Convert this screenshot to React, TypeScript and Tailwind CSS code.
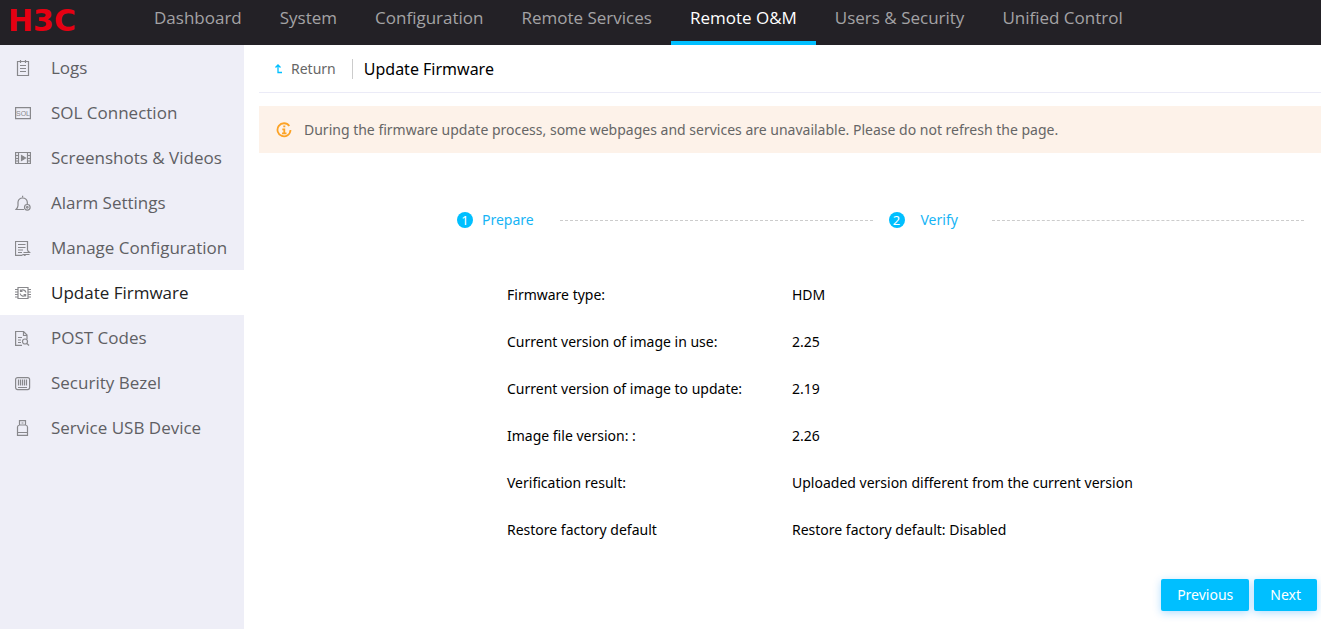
import type { ReactNode } from "react";
import clsx from "clsx";

const NAV = [
  "Dashboard",
  "System",
  "Configuration",
  "Remote Services",
  "Remote O&M",
  "Users & Security",
  "Unified Control",
];

function Icon({ children }: { children: ReactNode }) {
  return (
    <svg
      aria-hidden="true"
      viewBox="0 0 16 16"
      className="h-4 w-4 shrink-0 text-[#88888c]"
      fill="none"
      stroke="currentColor"
      strokeWidth="1.2"
    >
      {children}
    </svg>
  );
}

const MENU: { label: string; icon: ReactNode }[] = [
  {
    label: "Logs",
    icon: <path d="M2.5 1.5h11v14h-11zM5.5 0v3M10.5 0v3M5 5.5h6M5 8.5h6M5 11.5h6" />,
  },
  {
    label: "SOL Connection",
    icon: (
      <>
        <path d="M.6 2.6h14.8v11H.6z" />
        <text
          x="8"
          y="11"
          textAnchor="middle"
          stroke="none"
          fill="currentColor"
          className="font-['Liberation_Sans',sans-serif] text-[7px]"
        >
          SOL
        </text>
      </>
    ),
  },
  {
    label: "Screenshots & Videos",
    icon: (
      <>
        <path d="M.6 2.5h14.8v11H.6zM3.5 2.5v11M12.5 2.5v11M.5 5.5h3M.5 8.5h3M.5 11h3M12.5 5.5h3M12.5 8.5h3M12.5 11h3" />
        <path d="M6.5 5.5v5l4-2.5z" fill="currentColor" />
      </>
    ),
  },
  {
    label: "Alarm Settings",
    icon: (
      <>
        <path d="M9 14.5H1C2 13.5 3 12.3 3 10.5V7a4.7 4.7 0 0 1 9.3 0v2M7.6 2.3V.8" />
        <circle cx="12.3" cy="12.3" r="2.8" />
        <circle cx="12.3" cy="12.3" r=".8" />
      </>
    ),
  },
  {
    label: "Manage Configuration",
    icon: (
      <path d="M7.5 15.4h-7V1.5h12v9M3 4.5h7.5M3 7.5h7.5M3 10h5M3 12.5h4M8.5 12.5h6l-2-2M14.5 14.5h-6l2 1.5" />
    ),
  },
  {
    label: "Update Firmware",
    icon: (
      <>
        <path d="M3 2.5h10v11H3zM0 4.5h3M0 7h3M0 9.5h3M0 12h3M13 4.5h3M13 7h3M13 9.5h3M13 12h3" />
        <path d="M5.2 8.5a3 3 0 0 0 5 1.8M10.9 7.5a3 3 0 0 0-5-1.8M5.5 4.5v2h2M10.6 11.5v-2h-2" />
      </>
    ),
  },
  {
    label: "POST Codes",
    icon: (
      <>
        <path d="M7 15.4H.6V1.5h8L12 5v4M8.5 1.5v4H12M3 7.5h4M3 10h3M3 12.5h3" />
        <circle cx="10" cy="11.5" r="2.5" />
        <path d="m11.8 13.3 2.2 2.2" />
      </>
    ),
  },
  {
    label: "Security Bezel",
    icon: (
      <>
        <rect x=".6" y="2.6" width="14" height="12" rx="2" />
        <path d="M3.5 4.5v6M5.5 4.5v6M7.5 4.5v6M9.5 4.5v6M11.5 4.5v6M3 12.5h9" />
      </>
    ),
  },
  {
    label: "Service USB Device",
    icon: (
      <path d="M4.5 5V.6h6V5M6.5 3h2M4.5 5c-1.3.3-2 1-2 2v8.4h10V7c0-1-.7-1.7-2-2zM2.5 12.5h10" />
    ),
  },
];

const DETAILS = [
  ["Firmware type:", "HDM"],
  ["Current version of image in use:", "2.25"],
  ["Current version of image to update:", "2.19"],
  ["Image file version: :", "2.26"],
  ["Verification result:", "Uploaded version different from the current version"],
  ["Restore factory default", "Restore factory default: Disabled"],
];

function Header() {
  return (
    <header className="flex h-[45px] bg-[#232126]">
      <a
        href="#"
        className="flex w-[135px] shrink-0 items-center pb-1 pl-2 font-['DejaVu_Sans',sans-serif] text-[30px] leading-8 font-bold text-[#e60012]"
      >
        H3C
      </a>
      <nav className="flex font-['Open_Sans',sans-serif] text-[17px] leading-6">
        {NAV.map((item) => {
          const active = item === "Remote O&M";
          return (
            <a
              key={item}
              href="#"
              aria-current={active ? "page" : undefined}
              className={clsx(
                "border-b-4 px-[19px] pt-[6px] whitespace-nowrap",
                active ? "border-[#00bfff] text-white" : "border-transparent text-[#a3a3a5]"
              )}
            >
              {item}
            </a>
          );
        })}
      </nav>
    </header>
  );
}

function Sidebar() {
  return (
    <aside className="w-[244px] shrink-0 bg-[#eeeef7] font-['Open_Sans',sans-serif]">
      {MENU.map(({ label, icon }) => {
        const active = label === "Update Firmware";
        return (
          <a
            key={label}
            href="#"
            aria-current={active ? "page" : undefined}
            className={clsx(
              "flex h-[45px] items-center gap-5 pl-[15px] text-[17px] whitespace-nowrap",
              active ? "bg-white text-[#222]" : "text-[#5f5f64]"
            )}
          >
            <Icon>{icon}</Icon>
            {label}
          </a>
        );
      })}
    </aside>
  );
}

function Steps() {
  return (
    <ol className="flex pt-[55px] pr-[17px] pl-[198px] text-sm text-[#16b4f5]">
      {["Prepare", "Verify"].map((step, i) => (
        <li key={step} className="flex h-6 flex-1 items-center pr-4 last:pr-0">
          <span className="flex h-4 w-4 items-center justify-center rounded-full bg-[#00bfff] text-[13px] text-white">
            {i + 1}
          </span>
          <span className={clsx("w-[87px]", i === 0 ? "pl-[9px]" : "pl-4")}>{step}</span>
          <span className="flex-1 border-t border-dashed border-[#ccc]" />
        </li>
      ))}
    </ol>
  );
}

export default function App() {
  return (
    <div className="flex min-h-screen flex-col bg-white font-['Noto_Sans',sans-serif]">
      <Header />
      <div className="flex flex-1">
        <Sidebar />
        <main className="flex min-w-0 flex-1 flex-col pl-[15px]">
          <div className="flex h-12 items-center border-b border-[#ebebf7]">
            <a href="#" className="flex items-center gap-2 pl-4 text-sm text-[#666]">
              <svg
                aria-hidden="true"
                viewBox="0 0 8 10"
                className="h-[10px] w-2 text-[#00bfff]"
                fill="none"
                stroke="currentColor"
                strokeWidth="1.3"
              >
                <path d="M.5 3.5 3 1l2.5 2.5M3 1v7.5h4" />
              </svg>
              Return
            </a>
            <h1 className="ml-4 flex h-5 items-center border-l border-[#ccc] pl-[11px] text-base text-black">
              Update Firmware
            </h1>
          </div>

          <div
            role="alert"
            className="mt-[13px] flex h-[47px] items-center gap-3 bg-[#fdf2e9] pl-[17px] text-sm text-[#666]"
          >
            <svg
              aria-hidden="true"
              viewBox="0 0 16 16"
              className="h-4 w-4 shrink-0 text-[#fca326]"
              fill="none"
              stroke="currentColor"
              strokeWidth="1.8"
            >
              <path d="M13.3 4A6.5 6.5 0 1 0 14.5 8" />
              <path d="M7.3 4.3h2M6.3 7.4h2V11M6 11.3h4.5" />
            </svg>
            During the firmware update process, some webpages and services are unavailable. Please do not
            refresh the page.
          </div>

          <Steps />

          <table className="mt-[39px] ml-[248px] text-left text-sm text-black">
            <tbody>
              {DETAILS.map(([label, value]) => (
                <tr key={label} className="h-[47px]">
                  <th scope="row" className="w-[285px] font-normal">
                    {label}
                  </th>
                  <td>{value}</td>
                </tr>
              ))}
            </tbody>
          </table>

          <div className="mt-auto flex justify-end gap-[5px] pr-1 pb-[18px] text-sm text-white">
            {["Previous", "Next"].map((label) => (
              <button
                key={label}
                type="button"
                className="h-8 rounded-xs bg-[#00bfff] px-4 shadow-[0_2px_8px_rgba(0,145,255,0.3)]"
              >
                {label}
              </button>
            ))}
          </div>
        </main>
      </div>
    </div>
  );
}
